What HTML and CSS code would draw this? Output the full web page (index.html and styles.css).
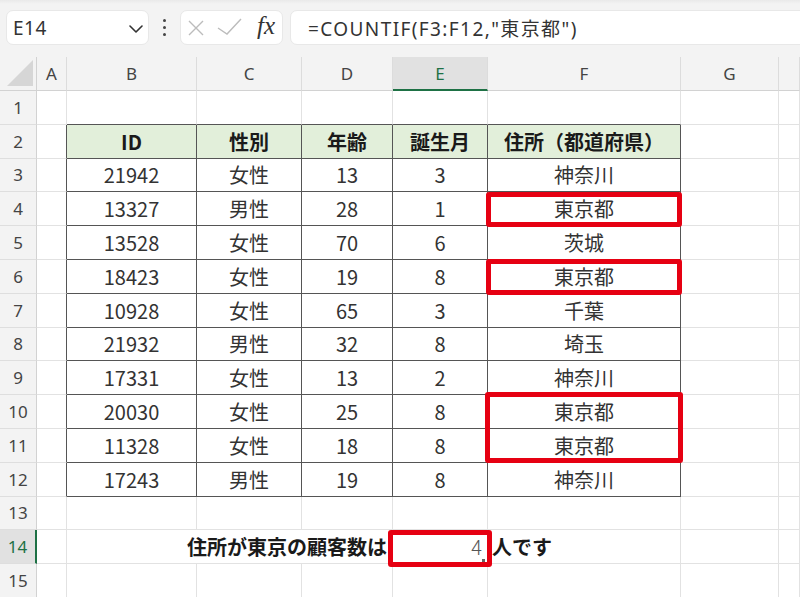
FILE: index.html
```html
<!DOCTYPE html>
<html lang="ja">
<head>
<meta charset="utf-8">
<title>COUNTIF</title>
<link rel="stylesheet" href="styles.css">
</head>
<body>
<div class="toolbar">
  <div class="namebox">
    <span class="nameval">E14</span>
    <svg class="chev" width="14" height="8" viewBox="0 0 14 8"><path d="M1 1 L7 7 L13 1" fill="none" stroke="#333" stroke-width="1.6" stroke-linecap="round" stroke-linejoin="round"/></svg>
  </div>
  <div class="dots"><i></i><i></i><i></i></div>
  <div class="fxbtns">
    <svg width="16" height="16" viewBox="0 0 16 16"><path d="M1 1 L15 15 M15 1 L1 15" stroke="#bcbcbc" stroke-width="1.4" fill="none"/></svg>
    <svg width="25" height="17" viewBox="0 0 25 17"><path d="M1 10 L10 16 L24 1" stroke="#bcbcbc" stroke-width="1.4" fill="none"/></svg>
    <span class="fx">fx</span>
  </div>
  <div class="formula">=COUNTIF(F3:F12,"東京都")</div>
</div>

<div class="sheet">
  <div class="row head">
    <div class="ch corner"><svg width="28" height="28" viewBox="0 0 28 28"><path d="M27 1 L27 27 L1 27 Z" fill="#d6d6d6"/></svg></div>
    <div class="ch">A</div><div class="ch">B</div><div class="ch">C</div><div class="ch">D</div>
    <div class="ch sel">E</div><div class="ch">F</div><div class="ch">G</div><div class="ch"></div>
  </div>

  <div class="row">
    <div class="rh">1</div><div class="c"></div>
    <div class="c tb"></div><div class="c tb"></div><div class="c tb"></div><div class="c tb"></div><div class="c tb"></div>
    <div class="c"></div><div class="c"></div>
  </div>
  <div class="row">
    <div class="rh">2</div><div class="c ta"></div>
    <div class="c t th">ID</div><div class="c t th">性別</div><div class="c t th">年齢</div><div class="c t th">誕生月</div><div class="c t th">住所（都道府県）</div>
    <div class="c"></div><div class="c"></div>
  </div>
  <div class="row">
    <div class="rh">3</div><div class="c ta"></div>
    <div class="c t">21942</div><div class="c t">女性</div><div class="c t">13</div><div class="c t">3</div><div class="c t">神奈川</div>
    <div class="c"></div><div class="c"></div>
  </div>
  <div class="row">
    <div class="rh">4</div><div class="c ta"></div>
    <div class="c t">13327</div><div class="c t">男性</div><div class="c t">28</div><div class="c t">1</div><div class="c t">東京都</div>
    <div class="c"></div><div class="c"></div>
  </div>
  <div class="row">
    <div class="rh">5</div><div class="c ta"></div>
    <div class="c t">13528</div><div class="c t">女性</div><div class="c t">70</div><div class="c t">6</div><div class="c t">茨城</div>
    <div class="c"></div><div class="c"></div>
  </div>
  <div class="row">
    <div class="rh">6</div><div class="c ta"></div>
    <div class="c t">18423</div><div class="c t">女性</div><div class="c t">19</div><div class="c t">8</div><div class="c t">東京都</div>
    <div class="c"></div><div class="c"></div>
  </div>
  <div class="row">
    <div class="rh">7</div><div class="c ta"></div>
    <div class="c t">10928</div><div class="c t">女性</div><div class="c t">65</div><div class="c t">3</div><div class="c t">千葉</div>
    <div class="c"></div><div class="c"></div>
  </div>
  <div class="row">
    <div class="rh">8</div><div class="c ta"></div>
    <div class="c t">21932</div><div class="c t">男性</div><div class="c t">32</div><div class="c t">8</div><div class="c t">埼玉</div>
    <div class="c"></div><div class="c"></div>
  </div>
  <div class="row">
    <div class="rh">9</div><div class="c ta"></div>
    <div class="c t">17331</div><div class="c t">女性</div><div class="c t">13</div><div class="c t">2</div><div class="c t">神奈川</div>
    <div class="c"></div><div class="c"></div>
  </div>
  <div class="row">
    <div class="rh">10</div><div class="c ta"></div>
    <div class="c t">20030</div><div class="c t">女性</div><div class="c t">25</div><div class="c t">8</div><div class="c t">東京都</div>
    <div class="c"></div><div class="c"></div>
  </div>
  <div class="row">
    <div class="rh">11</div><div class="c ta"></div>
    <div class="c t">11328</div><div class="c t">女性</div><div class="c t">18</div><div class="c t">8</div><div class="c t">東京都</div>
    <div class="c"></div><div class="c"></div>
  </div>
  <div class="row">
    <div class="rh">12</div><div class="c ta"></div>
    <div class="c t">17243</div><div class="c t">男性</div><div class="c t">19</div><div class="c t">8</div><div class="c t">神奈川</div>
    <div class="c"></div><div class="c"></div>
  </div>
  <div class="row">
    <div class="rh">13</div><div class="c"></div>
    <div class="c"></div><div class="c"></div><div class="c"></div><div class="c"></div><div class="c"></div>
    <div class="c"></div><div class="c"></div>
  </div>
  <div class="row">
    <div class="rh sel">14</div><div class="c"></div>
    <div class="c label">住所が東京の顧客数は</div>
    <div class="c num">4<span class="handle"></span></div>
    <div class="c unit">人です</div>
    <div class="c"></div><div class="c"></div>
  </div>
  <div class="row">
    <div class="rh">15</div><div class="c"></div>
    <div class="c"></div><div class="c"></div><div class="c"></div><div class="c"></div><div class="c"></div>
    <div class="c"></div><div class="c"></div>
  </div>

  <div class="redbox box-f4"></div>
  <div class="redbox box-f6"></div>
  <div class="redbox box-f10"></div>
  <div class="redbox box-e14"></div>
</div>
</body>
</html>
```

FILE: styles.css
```css
html, body {
  margin: 0;
  padding: 0;
  height: 597px;
  overflow: hidden;
}
body {
  background: #f3f3f3;
  font-family: "Noto Sans CJK JP", "Noto Sans", sans-serif;
  color: #2b2b2b;
}

/* ---------- toolbar ---------- */
.toolbar {
  height: 57px;
  box-sizing: border-box;
  padding: 10px 0 0 6px;
  display: flex;
  align-items: flex-start;
  overflow: hidden;
  background: linear-gradient(#e9e9e9 0, #f3f3f3 4px);
}
.namebox {
  width: 143px;
  height: 35px;
  box-sizing: border-box;
  background: #fff;
  border: 1px solid #e8e8e8;
  border-radius: 7px;
  display: flex;
  align-items: center;
  justify-content: space-between;
  padding: 0 5px 0 6px;
}
.nameval {
  font-family: "Noto Sans", sans-serif;
  font-size: 19px;
  letter-spacing: 0.5px;
  color: #333;
}
.chev { margin-top: 2px; }
.dots {
  width: 31px;
  height: 35px;
  display: flex;
  flex-direction: column;
  align-items: center;
  justify-content: center;
  gap: 4px;
}
.dots i {
  display: block;
  width: 3px;
  height: 3px;
  border-radius: 50%;
  background: #444;
}
.fxbtns {
  width: 103px;
  height: 35px;
  box-sizing: border-box;
  background: #fff;
  border: 1px solid #e8e8e8;
  border-radius: 7px;
  display: flex;
  align-items: center;
  padding: 0 0 0 7px;
  gap: 14px;
}
.fxbtns svg:nth-child(2) { margin-left: -1px; margin-top: -2px; }
.fx {
  font-family: "Liberation Serif", serif;
  font-style: italic;
  font-size: 25px;
  color: #333;
  margin-left: 1px;
  margin-top: -3px;
}
.formula {
  flex: 1;
  margin-left: 7px;
  margin-right: -12px;
  height: 35px;
  box-sizing: border-box;
  background: #fff;
  border: 1px solid #e8e8e8;
  border-radius: 7px;
  display: flex;
  align-items: center;
  padding-left: 17px;
  font-family: "Noto Sans", "Noto Sans CJK JP", sans-serif;
  font-size: 19px;
  letter-spacing: 1.4px;
  color: #333;
  white-space: nowrap;
}

/* ---------- sheet ---------- */
.sheet {
  position: relative;
  background: #fff;
}
.row {
  display: grid;
  grid-template-columns: 37px 30px 130px 105px 91px 95px 193px 98px 21px;
  height: 33.8px;
}
.row.head {
  height: 34px;
  background: #f3f3f3;
}
.ch {
  box-sizing: border-box;
  border-bottom: 1px solid #d2d2d2;
  border-right: 1px solid #dcdcdc;
  display: flex;
  align-items: center;
  justify-content: center;
  font-family: "Noto Sans", sans-serif;
  font-size: 17px;
  color: #444;
}
.ch.corner {
  align-items: flex-end;
  justify-content: flex-end;
  padding: 0 2px 3px 0;
  border-right-color: #d2d2d2;
}
.ch.sel {
  background: #e1e1e1;
  color: #1e7145;
  border-bottom: 2px solid #1e7145;
}

.rh {
  box-sizing: border-box;
  background: #f3f3f3;
  border-right: 1px solid #d2d2d2;
  border-bottom: 1px solid #dedede;
  display: flex;
  align-items: center;
  justify-content: center;
  font-family: "Noto Sans", sans-serif;
  font-size: 17px;
  color: #444;
}
.rh.sel {
  background: #e1e1e1;
  color: #1e7145;
  border-right: 2px solid #1e7145;
}

.c {
  box-sizing: border-box;
  border-right: 1px solid #e2e2e2;
  border-bottom: 1px solid #e2e2e2;
  display: flex;
  align-items: center;
  justify-content: center;
  font-size: 20px;
  color: #333;
  white-space: nowrap;
}
.c.t {
  border-right-color: #555;
  border-bottom-color: #555;
}
.c.ta { border-right-color: #555; }
.c.tb { border-bottom-color: #555; }
.c.th {
  background: #e2efda;
  font-weight: bold;
  color: #1a1a1a;
}
.c.label {
  grid-column: span 3;
  justify-content: flex-end;
  padding-right: 5px;
  font-weight: bold;
  color: #1a1a1a;
}
.c.num {
  position: relative;
  justify-content: flex-end;
  padding-right: 5px;
  color: #555;
  font-weight: 300;
}
.handle {
  position: absolute;
  right: 2px;
  bottom: 1px;
  width: 3px;
  height: 3px;
  background: #666;
}
.c.unit {
  justify-content: flex-start;
  padding-left: 4px;
  font-weight: bold;
  color: #1a1a1a;
}

/* ---------- red highlight boxes ---------- */
.redbox {
  position: absolute;
  box-sizing: border-box;
  border: 5px solid #e60012;
  border-radius: 3px;
}
.box-f4 { left: 486px; top: 135px; width: 196px; height: 35px; }
.box-f6 { left: 486px; top: 202px; width: 196px; height: 36px; }
.box-f10 { left: 485px; top: 335px; width: 198px; height: 71px; }
.box-e14 { left: 388px; top: 473px; width: 104px; height: 37px; }
```
